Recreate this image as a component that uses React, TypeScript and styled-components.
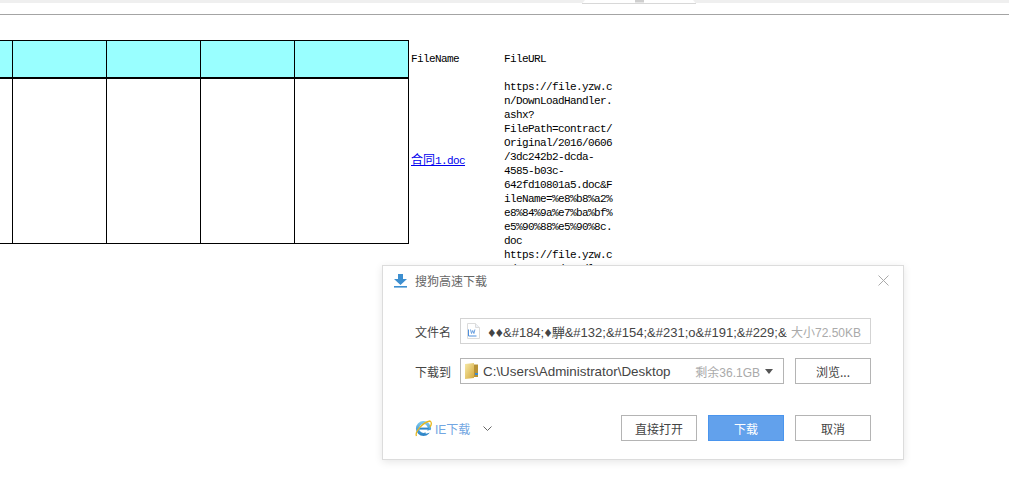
import React from 'react';
import styled, { createGlobalStyle } from 'styled-components';

const Global = createGlobalStyle`
  html, body { margin: 0; padding: 0; background: #fff; width: 1009px; height: 478px; overflow: hidden; }
  #root { width: 1009px; height: 478px; position: relative; overflow: hidden; }
`;

const TopStrip = styled.div`
  height: 3px;
  background: #efefef;
  position: relative;
`;
const TabShape = styled.svg`
  position: absolute;
  left: 582px;
  top: 0;
`;
const Rule = styled.div`
  margin-top: 11px;
  height: 1px;
  background: #a4a4a4;
`;
const Content = styled.div`
  display: flex;
  align-items: flex-start;
  padding-top: 25px;
  font: 11px/14px "Liberation Mono", "Noto Sans CJK SC", monospace;
  letter-spacing: -0.6px;
  color: #000;
`;
const Grid = styled.div`
  display: grid;
  grid-template-columns: 13px repeat(3, 94px) 113px;
  grid-template-rows: 38px 165px;
  width: 409px;
  flex: none;
  border-top: 1px solid #000;
  border-right: 1px solid #000;
  border-bottom: 1px solid #000;
  box-sizing: border-box;
  height: 204px;
`;
const HeadCell = styled.div`
  background: #99ffff;
  border-right: 1px solid #000;
  border-bottom: 2px solid #000;
  &:nth-child(5) { border-right: 0; }
`;
const BodyCell = styled.div`
  border-right: 1px solid #000;
  &:nth-child(10) { border-right: 0; }
`;
const Files = styled.div`
  display: grid;
  grid-template-columns: 93px 109px;
  margin-left: 2px;
  padding-top: 12px;
`;
const NameHead = styled.div`
  height: 27px;
`;
const UrlHead = styled.div`
  height: 27px;
`;
const NameCell = styled.div`
  display: flex;
  align-items: center;
  align-self: start;
  height: 164px;
`;
const FileLink = styled.a`
  color: #0000ee;
  text-decoration: underline;
`;
const LinkCjk = styled.span`
  font-size: 12px;
  letter-spacing: 0;
`;
const UrlCell = styled.div`
  width: 109px;
  overflow-wrap: anywhere;
  padding-top: 1px;
`;

const Dialog = styled.div`
  position: absolute;
  left: 382px;
  top: 265px;
  width: 522px;
  height: 195px;
  box-sizing: border-box;
  background: #fff;
  border: 1px solid #dcdcdc;
  box-shadow: 0 2px 8px rgba(0, 0, 0, 0.1);
  font-family: "Noto Sans CJK SC", "Liberation Sans", sans-serif;
  font-size: 12px;
  color: #555;
  display: flex;
  flex-direction: column;
`;
const TitleBar = styled.div`
  height: 30px;
  display: flex;
  align-items: center;
  padding: 0 14px 0 11px;
  gap: 8px;
  color: #666;
`;
const TitleText = styled.span`
  flex: 1;
  line-height: 30px;
`;
const Body = styled.div`
  padding: 22px 32px 0 32px;
  display: flex;
  flex-direction: column;
  gap: 14px;
`;
const Row = styled.div`
  display: flex;
  align-items: center;
  height: 26px;
`;
const Label = styled.span`
  width: 45px;
  flex: none;
  color: #444;
`;
const Field = styled.div`
  width: 411px;
  height: 26px;
  box-sizing: border-box;
  border: 1px solid #d3d3d3;
  display: flex;
  align-items: center;
  padding: 0 9px 0 6px;
  font: 13px "Liberation Sans", "Noto Sans CJK SC", sans-serif;
  color: #444;
  white-space: nowrap;
  overflow: hidden;
`;
const FileText = styled.span`
  flex: 1;
  min-width: 0;
  overflow: hidden;
  margin-left: 8px;
`;
const BadGlyph = styled.span`
  display: inline-block;
  width: 7.5px;
  text-align: center;
  font-size: 14px;
  line-height: 1;
`;
const Hint = styled.span`
  color: #aaa;
  margin-left: 4px;
  flex: none;
  font-size: 12px;
`;
const PathField = styled(Field)`
  width: 324px;
  border-color: #b4b4b4;
  padding: 0 10px 0 4px;
`;
const PathText = styled.span`
  flex: 1;
  margin-left: 5px;
  font-size: 13.4px;
`;
const Arrow = styled.span`
  width: 0;
  height: 0;
  margin-left: 5px;
  border-left: 4px solid transparent;
  border-right: 4px solid transparent;
  border-top: 5px solid #555;
`;
const Button = styled.button<{ $primary?: boolean }>`
  width: 76px;
  height: 26px;
  box-sizing: border-box;
  border: 1px solid ${p => (p.$primary ? '#4a95ee' : '#b4b4b4')};
  background: ${p => (p.$primary ? '#62a1ec' : '#fff')};
  color: ${p => (p.$primary ? '#fff' : '#444')};
  font: 12px "Noto Sans CJK SC", "Liberation Sans", sans-serif;
  padding: 0;
`;
const Browse = styled(Button)`
  margin-left: 11px;
`;
const Footer = styled.div`
  display: flex;
  align-items: center;
  margin-top: 31px;
  padding: 0 32px;
  height: 26px;
`;
const IeLink = styled.span`
  color: #72a6e2;
  margin-left: 3px;
  font-family: "Liberation Sans", "Noto Sans CJK SC", sans-serif;
`;
const Chevron = styled.svg`
  margin: 2px 0 0 13px;
  flex: none;
`;
const Actions = styled.div`
  margin-left: auto;
  display: flex;
  gap: 11px;
`;
const CloseSvg = styled.svg`
  margin-bottom: 2px;
`;
const IconSvg = styled.svg`
  flex: none;
`;

const DownloadIcon = () => (
  <IconSvg width="13" height="14" viewBox="0 0 13 14">
    <path d="M4 0h5v5h4L6.5 11 0 5h4z" fill="#3d8fd0" />
    <rect x="0" y="12" width="13" height="1.6" fill="#3d8fd0" />
  </IconSvg>
);
const CloseIcon = () => (
  <CloseSvg width="11" height="11" viewBox="0 0 11 11">
    <path d="M0.5 0.5l10 10M10.5 0.5l-10 10" stroke="#aaa" strokeWidth="1" fill="none" />
  </CloseSvg>
);
const DocIcon = () => (
  <IconSvg width="13" height="16" viewBox="0 0 13 16">
    <path d="M0.5 0.5h8l4 4v11h-12z" fill="#fff" stroke="#dcdcdc" />
    <path d="M8.5 0.5v4h4" fill="#eef2f8" stroke="#dcdcdc" />
    <path d="M1.5 6.5v6.5h8" fill="none" stroke="#4f8fdc" strokeWidth="1" />
    <path d="M3.5 6.5l1 4 1.2-3 1.2 3 1-4" fill="none" stroke="#6aa0e0" strokeWidth="1" />
  </IconSvg>
);
const FolderIcon = () => (
  <IconSvg width="13" height="16" viewBox="0 0 13 16">
    <defs>
      <linearGradient id="fold" x1="0" y1="0" x2="1" y2="1">
        <stop offset="0" stopColor="#f7eaa8" />
        <stop offset="1" stopColor="#d4a83c" />
      </linearGradient>
    </defs>
    <path d="M0 1l9-1v15l-9 1z" fill="url(#fold)" />
    <path d="M9 1.5h4v12.5H9z" fill="#b79236" />
    <rect x="10" y="10" width="3" height="2" fill="#3a8bd0" />
  </IconSvg>
);
const IeIcon = () => (
  <IconSvg width="17" height="17" viewBox="0 0 17 17">
    <defs>
      <linearGradient id="iee" x1="0" y1="0" x2="0" y2="1">
        <stop offset="0" stopColor="#7cc8ee" />
        <stop offset="1" stopColor="#2f86c8" />
      </linearGradient>
    </defs>
    <circle cx="8.5" cy="8.5" r="6" fill="none" stroke="url(#iee)" strokeWidth="3.2" />
    <rect x="4" y="7.6" width="9.5" height="2" fill="#2f86c8" />
    <path d="M10.5 12.5l5.5 -1.5" stroke="#fff" strokeWidth="2.6" />
    <path d="M1.5 16C-0.5 12 8 2 15 1c2 1 1.5 4 0 6" fill="none" stroke="#e8b820" strokeWidth="1.3" />
  </IconSvg>
);

const URL = 'https://file.yzw.cn/DownLoadHandler.ashx?FilePath=contract/Original/2016/0606/3dc242b2-dcda-4585-b03c-642fd10801a5.doc&FileName=%e8%b8%a2%e8%84%9a%e7%ba%bf%e5%90%88%e5%90%8c.doc';
const URL_NEXT = 'https://file.yzw.cn/DownLoadHandler.ashx?';

export default function App() {
  return (
    <>
      <Global />
      <TopStrip>
        <TabShape width="114" height="4" viewBox="0 0 114 4">
          <path d="M0 3.5L3 0h108l3 3.5z" fill="#fff" />
          <path d="M0 3.5h114" stroke="#d8d8d8" strokeWidth="1" />
          <rect x="53" y="0" width="9" height="2.5" fill="#cfcfcf" />
        </TabShape>
      </TopStrip>
      <Rule />
      <Content>
        <Grid>
          <HeadCell /><HeadCell /><HeadCell /><HeadCell /><HeadCell />
          <BodyCell /><BodyCell /><BodyCell /><BodyCell /><BodyCell />
        </Grid>
        <Files>
          <NameHead>FileName</NameHead>
          <UrlHead>FileURL</UrlHead>
          <NameCell><FileLink><LinkCjk>合同</LinkCjk>1.doc</FileLink></NameCell>
          <UrlCell>{URL}<br />{URL_NEXT}</UrlCell>
        </Files>
      </Content>
      <Dialog>
        <TitleBar>
          <DownloadIcon />
          <TitleText>搜狗高速下载</TitleText>
          <CloseIcon />
        </TitleBar>
        <Body>
          <Row>
            <Label>文件名</Label>
            <Field>
              <DocIcon />
              <FileText><BadGlyph>♦</BadGlyph><BadGlyph>♦</BadGlyph>&amp;#184;<BadGlyph>♦</BadGlyph>騨&amp;#132;&amp;#154;&amp;#231;o&amp;#191;&amp;#229;&amp;#144;</FileText>
              <Hint>大小72.50KB</Hint>
            </Field>
          </Row>
          <Row>
            <Label>下载到</Label>
            <PathField>
              <FolderIcon />
              <PathText>C:\Users\Administrator\Desktop</PathText>
              <Hint>剩余36.1GB</Hint>
              <Arrow />
            </PathField>
            <Browse>浏览...</Browse>
          </Row>
        </Body>
        <Footer>
          <IeIcon />
          <IeLink>IE下载</IeLink>
          <Chevron width="9" height="6" viewBox="0 0 9 6">
            <path d="M0.5 0.5l4 4 4-4" stroke="#666" fill="none" />
          </Chevron>
          <Actions>
            <Button>直接打开</Button>
            <Button $primary>下载</Button>
            <Button>取消</Button>
          </Actions>
        </Footer>
      </Dialog>
    </>
  );
}
